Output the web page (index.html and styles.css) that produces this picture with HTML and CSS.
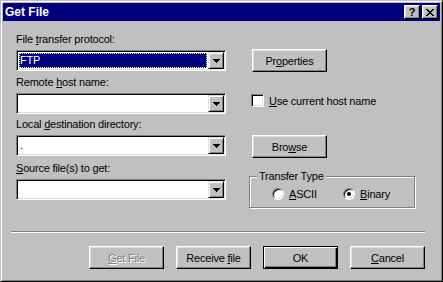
FILE: index.html
```html
<!DOCTYPE html>
<html lang="en">
<head>
    <meta charset="UTF-8">
    <title>Get File</title>
    <link rel="stylesheet" href="styles.css">
</head>
<body>
    <div class="window">
        <div class="titlebar">
            <span class="title">Get File</span>
            <div class="caption-buttons">
                <button class="caption-btn help">?</button>
                <button class="caption-btn close">
                    <svg width="8" height="7" viewBox="0 0 8 7" shape-rendering="crispEdges">
                        <path d="M0 0h2v1h-2zM6 0h2v1h-2zM1 1h2v1h-2zM5 1h2v1h-2zM2 2h4v1h-4zM3 3h2v1h-2zM2 4h4v1h-4zM1 5h2v1h-2zM5 5h2v1h-2zM0 6h2v1h-2zM6 6h2v1h-2z" fill="#000"/>
                    </svg>
                </button>
            </div>
        </div>

        <div class="fields">
            <!-- Zeile 1 -->
            <div class="field">
                <label>File <u>t</u>ransfer protocol:</label>
                <div class="combo">
                    <div class="combo-text"><span class="selected">FTP</span></div>
                    <span class="drop"><svg width="7" height="4" viewBox="0 0 7 4" shape-rendering="crispEdges"><path d="M0 0h7v1h-1v1h-1v1h-1v1h-1v-1h-1v-1h-1v-1h-1z" fill="#000"/></svg></span>
                </div>
            </div>
            <div class="side side-props">
                <button class="btn">Pr<u>o</u>perties</button>
            </div>

            <!-- Zeile 2 -->
            <div class="field">
                <label>Remote <u>h</u>ost name:</label>
                <div class="combo">
                    <div class="combo-text"></div>
                    <span class="drop"><svg width="7" height="4" viewBox="0 0 7 4" shape-rendering="crispEdges"><path d="M0 0h7v1h-1v1h-1v1h-1v1h-1v-1h-1v-1h-1v-1h-1z" fill="#000"/></svg></span>
                </div>
            </div>
            <div class="side side-check">
                <div class="check-row">
                    <span class="checkbox"></span>
                    <span><u>U</u>se current host name</span>
                </div>
            </div>

            <!-- Zeile 3 -->
            <div class="field">
                <label>Local <u>d</u>estination directory:</label>
                <div class="combo">
                    <div class="combo-text"><span class="value">.</span></div>
                    <span class="drop"><svg width="7" height="4" viewBox="0 0 7 4" shape-rendering="crispEdges"><path d="M0 0h7v1h-1v1h-1v1h-1v1h-1v-1h-1v-1h-1v-1h-1z" fill="#000"/></svg></span>
                </div>
            </div>
            <div class="side side-browse">
                <button class="btn">Bro<u>w</u>se</button>
            </div>

            <!-- Zeile 4 -->
            <div class="field">
                <label><u>S</u>ource file(s) to get:</label>
                <div class="combo">
                    <div class="combo-text"></div>
                    <span class="drop"><svg width="7" height="4" viewBox="0 0 7 4" shape-rendering="crispEdges"><path d="M0 0h7v1h-1v1h-1v1h-1v1h-1v-1h-1v-1h-1v-1h-1z" fill="#000"/></svg></span>
                </div>
            </div>
            <div class="side side-group">
                <div class="group">
                    <span class="legend">Transfer Type</span>
                    <div class="radio-row">
                        <div class="radio-item">
                            <span class="radio"></span>
                            <span><u>A</u>SCII</span>
                        </div>
                        <div class="radio-item">
                            <span class="radio checked"></span>
                            <span><u>B</u>inary</span>
                        </div>
                    </div>
                </div>
            </div>
        </div>

        <div class="separator"></div>

        <div class="buttons">
            <button class="btn disabled"><u>G</u>et File</button>
            <button class="btn">Receive <u>f</u>ile</button>
            <button class="btn default">OK</button>
            <button class="btn"><u>C</u>ancel</button>
        </div>
    </div>
</body>
</html>
```

FILE: styles.css
```css
html, body {
    margin: 0;
    padding: 0;
}
body {
    font-family: "Liberation Sans", Arial, sans-serif;
    font-size: 11px;
    letter-spacing: -0.2px;
    color: #000;
    background-color: #c0c0c0;
}
.window {
    width: 443px;
    height: 282px;
    box-sizing: border-box;
    background-color: #c0c0c0;
    border: 1px solid;
    border-color: #c0c0c0 #000 #000 #c0c0c0;
    box-shadow: inset 1px 1px #fff, inset -1px -1px #808080;
    padding: 2px;
}
.titlebar {
    height: 18px;
    background-color: #000080;
    display: flex;
    align-items: center;
    justify-content: space-between;
    padding: 0 2px 0 2px;
}
.title {
    color: #fff;
    font-weight: bold;
    font-size: 12px;
    letter-spacing: 0;
}
.caption-buttons {
    display: flex;
    gap: 2px;
}
.caption-btn {
    width: 16px;
    height: 14px;
    box-sizing: border-box;
    padding: 0;
    margin: 0;
    background-color: #c0c0c0;
    border: 1px solid;
    border-color: #fff #000 #000 #fff;
    box-shadow: inset -1px -1px #808080, inset 1px 1px #dfdfdf;
    display: flex;
    align-items: center;
    justify-content: center;
}
.help {
    font-family: "Liberation Sans", Arial, sans-serif;
    font-weight: bold;
    font-size: 11px;
    line-height: 1;
}
.fields {
    display: grid;
    grid-template-columns: 210px 166px;
    column-gap: 23px;
    row-gap: 4px;
    margin: 12px 0 0 13px;
    align-items: start;
}
.field {
    display: flex;
    flex-direction: column;
    gap: 4px;
}
.field label {
    line-height: 13px;
}
.combo {
    width: 210px;
    height: 21px;
    box-sizing: border-box;
    border: 1px solid;
    border-color: #808080 #fff #fff #808080;
    box-shadow: inset 1px 1px #000, inset -1px -1px #dfdfdf;
    background-color: #fff;
    padding: 1px;
    display: flex;
}
.combo-text {
    flex: 1;
    padding: 1px;
    display: flex;
}
.selected {
    flex: 1;
    background-color: #000080;
    color: #fff;
    padding-left: 1px;
    line-height: 15px;
    outline: 1px dotted #ffff80;
    outline-offset: -1px;
}
.value {
    line-height: 15px;
    padding-left: 1px;
}
.drop {
    width: 16px;
    height: 17px;
    box-sizing: border-box;
    background-color: #c0c0c0;
    border: 1px solid;
    border-color: #dfdfdf #000 #000 #dfdfdf;
    box-shadow: inset 1px 1px #fff, inset -1px -1px #808080;
    display: flex;
    align-items: center;
    justify-content: center;
    padding-top: 1px;
}
.drop svg {
    display: block;
}
.btn {
    width: 75px;
    height: 23px;
    box-sizing: border-box;
    padding: 0;
    margin: 0;
    font-family: "Liberation Sans", Arial, sans-serif;
    font-size: 11px;
    letter-spacing: -0.2px;
    color: #000;
    background-color: #c0c0c0;
    border: 1px solid;
    border-color: #fff #000 #000 #fff;
    box-shadow: inset -1px -1px #808080, inset 1px 1px #dfdfdf;
}
.btn.default {
    border-color: #000;
    box-shadow: inset 1px 1px #fff, inset -1px -1px #000, inset -2px -2px #808080;
}
.btn.disabled {
    color: #808080;
    text-shadow: 1px 1px #fff;
}
.side-props {
    margin: 16px 0 0 3px;
}
.side-check {
    margin: 18px 0 0 2px;
}
.side-browse {
    margin: 17px 0 0 3px;
}
.side-group {
    margin-top: 14px;
}
.check-row {
    display: flex;
    align-items: center;
    gap: 5px;
    height: 13px;
}
.checkbox {
    width: 13px;
    height: 13px;
    box-sizing: border-box;
    background-color: #fff;
    border: 1px solid;
    border-color: #808080 #fff #fff #808080;
    box-shadow: inset 1px 1px #000, inset -1px -1px #dfdfdf;
}
.group {
    width: 166px;
    height: 32px;
    box-sizing: border-box;
    border: 1px solid #808080;
    box-shadow: inset 1px 1px #fff, 1px 1px #fff;
}
.legend {
    display: block;
    width: fit-content;
    margin: -7px 0 0 7px;
    padding: 0 2px;
    line-height: 13px;
    background-color: #c0c0c0;
}
.radio-row {
    display: flex;
    margin-top: 5px;
    padding-left: 22px;
}
.radio-item {
    display: flex;
    align-items: center;
    gap: 5px;
    width: 78px;
    height: 12px;
}
.radio {
    width: 12px;
    height: 12px;
    box-sizing: border-box;
    border-radius: 50%;
    background-color: #fff;
    border: 1px solid;
    border-color: #808080 #fff #fff #808080;
    box-shadow: inset 1px 1px #000, inset -1px -1px #dfdfdf;
    display: flex;
    align-items: center;
    justify-content: center;
}
.radio.checked::after {
    content: "";
    width: 4px;
    height: 4px;
    border-radius: 50%;
    background-color: #000;
}
.separator {
    margin: 23px 15px 0 8px;
    border-top: 1px solid #808080;
    border-bottom: 1px solid #fff;
}
.buttons {
    display: flex;
    justify-content: flex-end;
    gap: 12px;
    margin-top: 13px;
    padding-right: 15px;
}
```
